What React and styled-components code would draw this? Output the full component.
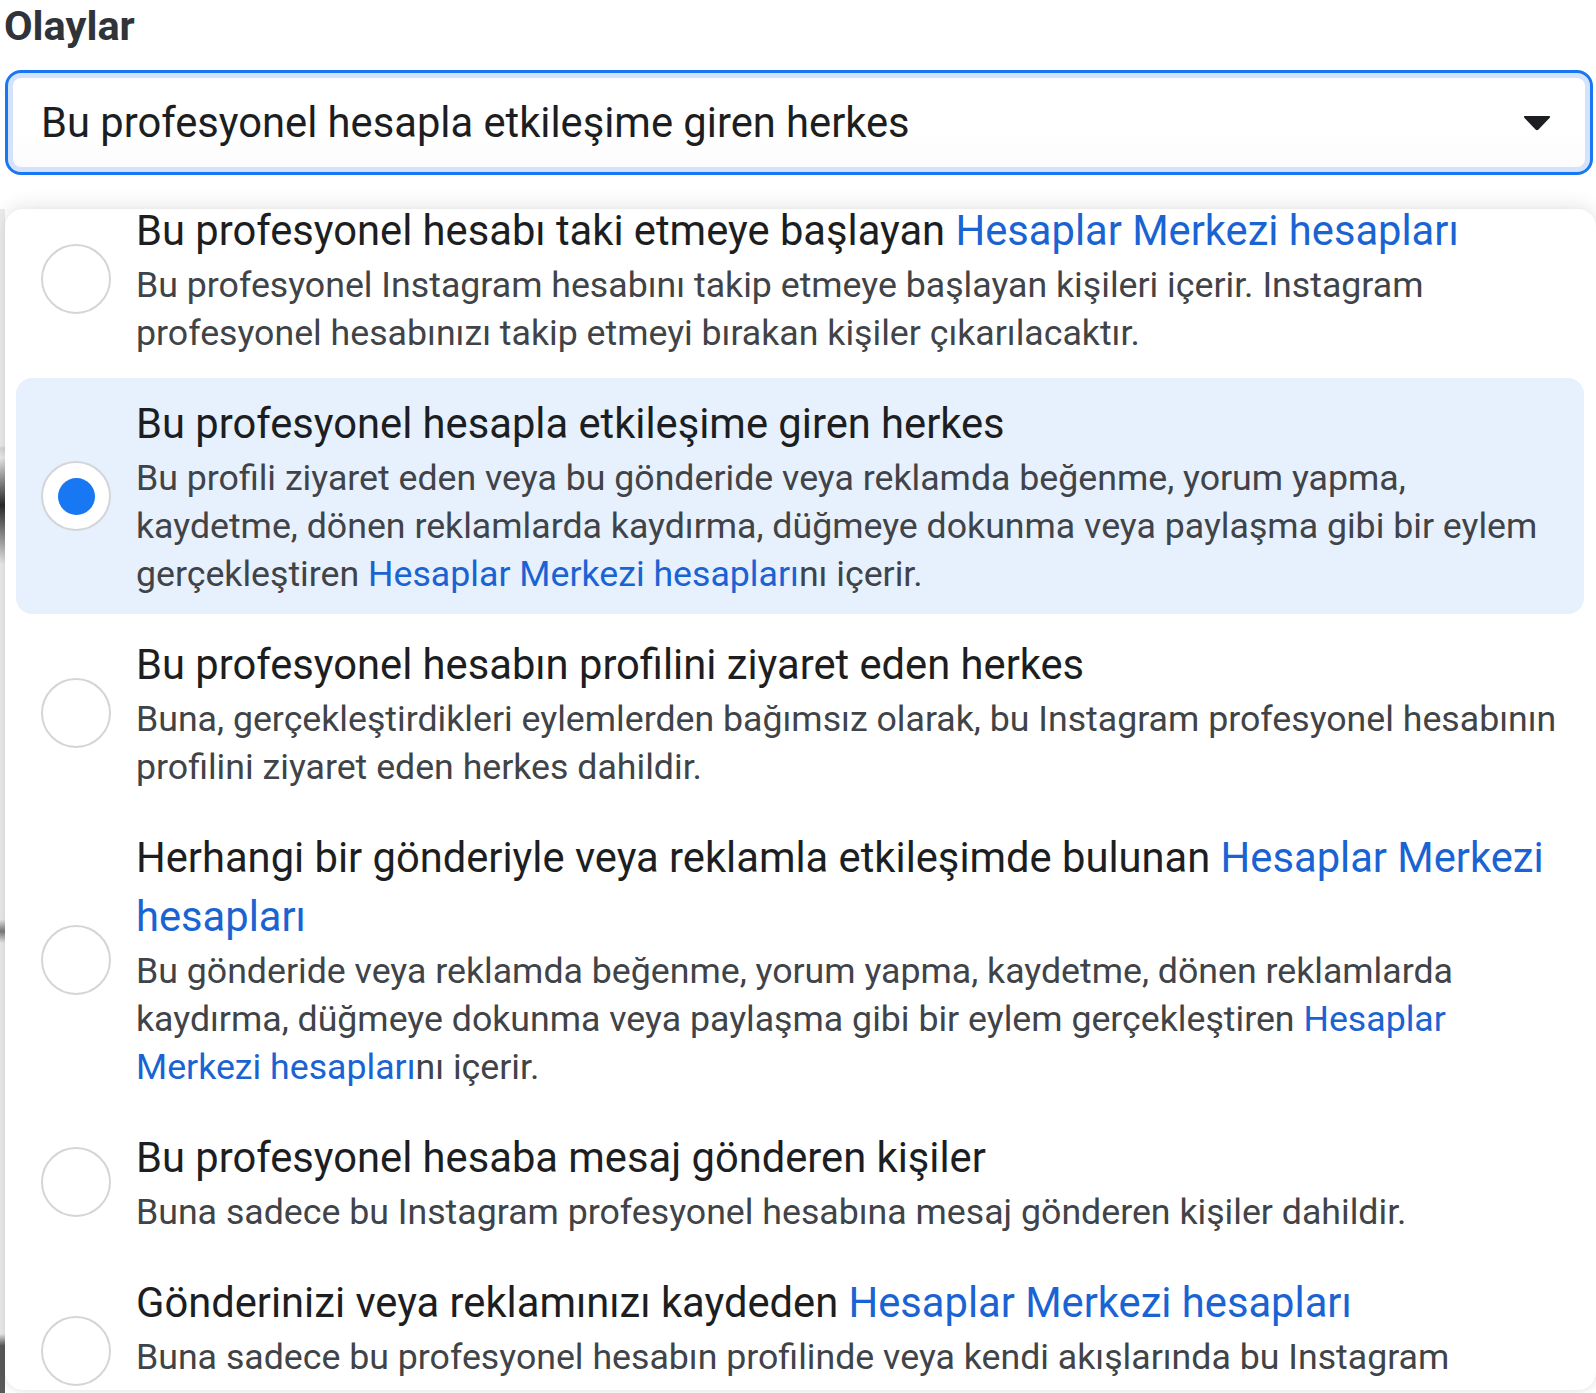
import React, { useLayoutEffect, useRef } from 'react'
import styled, { createGlobalStyle } from 'styled-components'

const GlobalStyle = createGlobalStyle`
        html, body {
                margin: 0;
                padding: 0;
                background: #ffffff;
        }

        body {
                font-family: Roboto, "Liberation Sans", Arial, sans-serif;
                color: #1c1e21;
                -webkit-font-smoothing: antialiased;
        }
`

const Page = styled.div`
        display: flex;
        flex-direction: column;
        height: 1393px;
        overflow: hidden;
`

const Label = styled.div`
        padding-left: 4px;
        font-size: 41.5px;
        font-weight: 700;
        line-height: 52px;
        color: #303338;
`

const Select = styled.div`
        display: flex;
        align-items: center;
        justify-content: space-between;
        height: 105px;
        margin: 18px 3px 0 5px;
        padding: 0 38px 0 33px;
        box-sizing: border-box;
        border: 3px solid #1877f2;
        border-radius: 16px;
        box-shadow: inset 0 0 0 5px #d4e3fb;
        background: linear-gradient(#ffffff 60%, #fbfbfb);

        span {
                font-size: 41.7px;
                color: #1c1e21;
        }
`

const Lower = styled.div`
        flex: 1;
        display: flex;
        margin-top: 34px;
        min-height: 0;
`

const Edge = styled.div`
        width: 5px;
        flex-shrink: 0;
        background: linear-gradient(
                #ececec 0%,
                #ececec 20%,
                #d6d6d6 20.2%,
                #ececec 21%,
                #2a2a2a 25%,
                #ececec 30%,
                #ececec 60%,
                #7a7a7a 61%,
                #ececec 62%,
                #ececec 95%,
                #5a5a5a 96%
        );
`

const Panel = styled.div`
        flex: 1;
        background: #ffffff;
        border-radius: 18px;
        box-shadow: 0 -4px 18px rgba(0, 0, 0, 0.09), 0 2px 6px rgba(0, 0, 0, 0.06);
        overflow: hidden;
        margin-bottom: 3px;
`

const List = styled.div`
        display: flex;
        flex-direction: column;
        gap: 5px;
        padding: 0 12px 20px 11px;
`

const Row = styled.div`
        display: flex;
        align-items: center;
        gap: 25px;
        padding: 16px 22px 16px 25px;
        border-radius: 16px;
        background: ${({ selected }) => (selected ? '#e7f0fd' : 'transparent')};
`

const Radio = styled.div`
        width: 70px;
        height: 70px;
        flex-shrink: 0;
        box-sizing: border-box;
        border-radius: 50%;
        border: 2.5px solid #d3d5d8;
        background: #ffffff;
        display: flex;
        align-items: center;
        justify-content: center;

        &::after {
                content: '';
                display: ${({ checked }) => (checked ? 'block' : 'none')};
                width: 37px;
                height: 37px;
                border-radius: 50%;
                background: #1877f2;
        }
`

const Texts = styled.div`
        flex: 1;
        min-width: 0;
`

const Title = styled.div`
        font-size: 41.7px;
        line-height: 59px;
        color: #1c1e21;
        margin-bottom: 1px;
`

const Desc = styled.div`
        font-size: 35.7px;
        line-height: 48px;
        color: #404347;
`

const Link = styled.span`
        color: #1a63d3;
`

const Caret = () => (
        <svg width="30" height="20" viewBox="0 0 30 20">
                <path d="M3 3 H27 Q29 3 27.5 5 L16.5 16.5 Q15 18 13.5 16.5 L2.5 5 Q1 3 3 3 Z" fill="#1c1e21" />
        </svg>
)

const HM = 'Hesaplar Merkezi hesapları'

const options = [
        {
                title: <>Bu profesyonel hesabı taki etmeye başlayan <Link>{HM}</Link></>,
                desc: <>Bu profesyonel Instagram hesabını takip etmeye başlayan kişileri içerir. Instagram profesyonel hesabınızı takip etmeyi bırakan kişiler çıkarılacaktır.</>,
        },
        {
                title: <>Bu profesyonel hesapla etkileşime giren herkes</>,
                desc: <>Bu profili ziyaret eden veya bu gönderide veya reklamda beğenme, yorum yapma, kaydetme, dönen reklamlarda kaydırma, düğmeye dokunma veya paylaşma gibi bir eylem gerçekleştiren <Link>Hesaplar Merkezi hesapları</Link>nı içerir.</>,
                selected: true,
        },
        {
                title: <>Bu profesyonel hesabın profilini ziyaret eden herkes</>,
                desc: <>Buna, gerçekleştirdikleri eylemlerden bağımsız olarak, bu Instagram profesyonel hesabının profilini ziyaret eden herkes dahildir.</>,
        },
        {
                title: <>Herhangi bir gönderiyle veya reklamla etkileşimde bulunan <Link>{HM}</Link></>,
                desc: <>Bu gönderide veya reklamda beğenme, yorum yapma, kaydetme, dönen reklamlarda kaydırma, düğmeye dokunma veya paylaşma gibi bir eylem gerçekleştiren <Link>Hesaplar Merkezi hesapları</Link>nı içerir.</>,
        },
        {
                title: <>Bu profesyonel hesaba mesaj gönderen kişiler</>,
                desc: <>Buna sadece bu Instagram profesyonel hesabına mesaj gönderen kişiler dahildir.</>,
        },
        {
                title: <>Gönderinizi veya reklamınızı kaydeden <Link>{HM}</Link></>,
                desc: <>Buna sadece bu profesyonel hesabın profilinde veya kendi akışlarında bu Instagram profesyonel hesabın gönderisini veya reklamını kaydeden kişiler dahildir.</>,
        },
]

const App = () => {

        const panelRef = useRef(null)

        // the dropdown is shown scrolled a little
        useLayoutEffect(() => {
                if (panelRef.current) panelRef.current.scrollTop = 24
        }, [])

        return (
                <Page>
                        <GlobalStyle />
                        <Label>Olaylar</Label>
                        <Select>
                                <span>Bu profesyonel hesapla etkileşime giren herkes</span>
                                <Caret />
                        </Select>
                        <Lower>
                                <Edge />
                                <Panel ref={panelRef}>
                                        <List>
                                                {
                                                        options.map( (opt, i) => (
                                                                <Row key={i} selected={opt.selected}>
                                                                        <Radio checked={opt.selected} />
                                                                        <Texts>
                                                                                <Title>{opt.title}</Title>
                                                                                <Desc>{opt.desc}</Desc>
                                                                        </Texts>
                                                                </Row>
                                                        ) )
                                                }
                                        </List>
                                </Panel>
                        </Lower>
                </Page>
        )
}

export default App
